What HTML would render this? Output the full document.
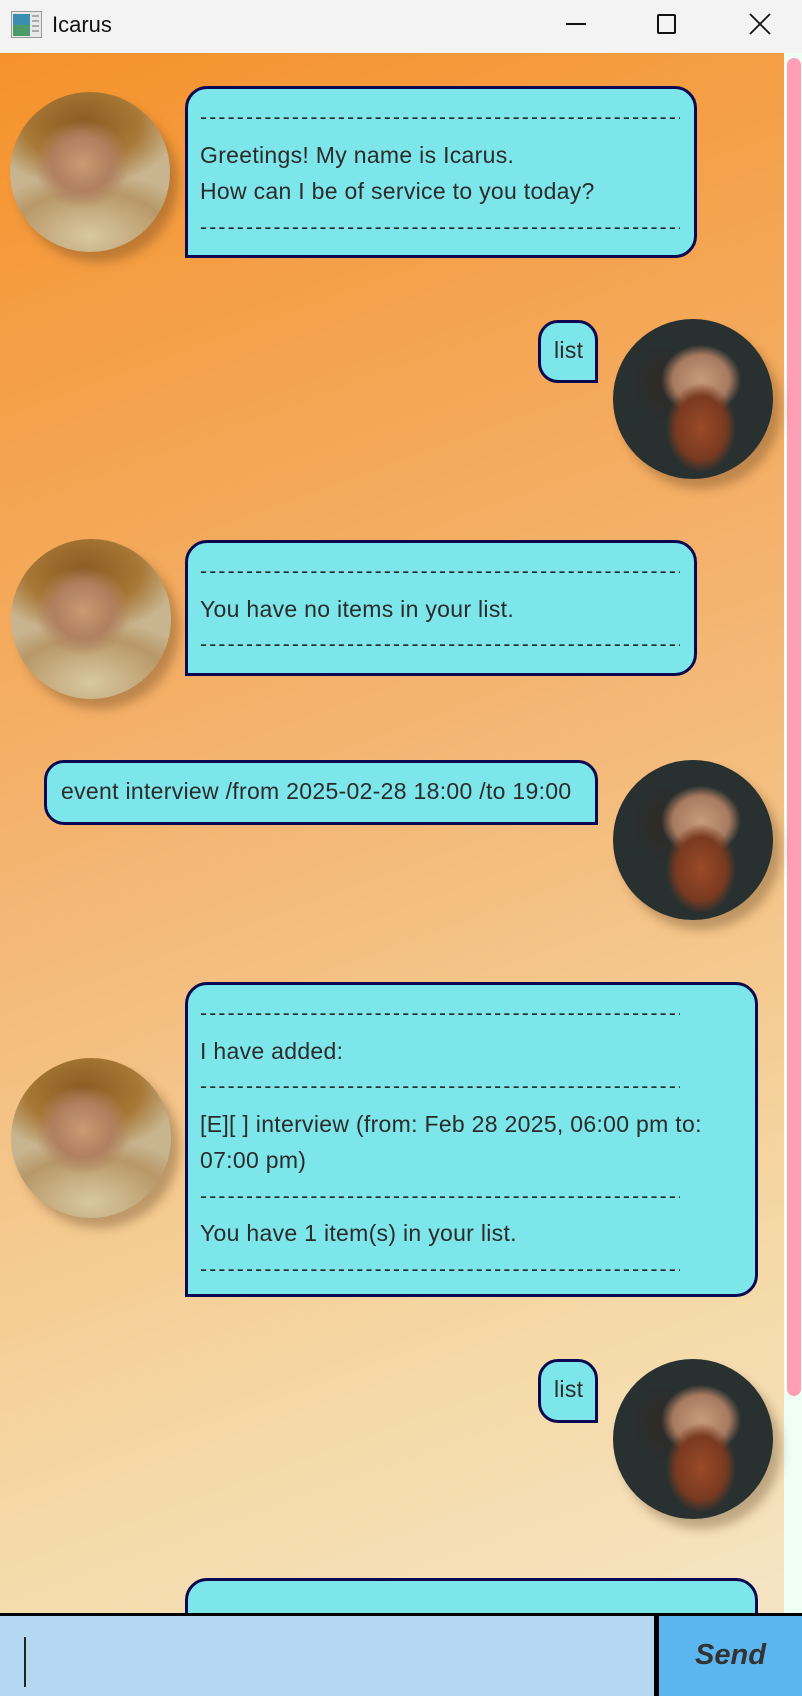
<!DOCTYPE html>
<html><head><meta charset="utf-8"><style>
*{margin:0;padding:0;box-sizing:border-box}
body{width:802px;height:1696px;overflow:hidden;font-family:"Liberation Sans",sans-serif;background:#f3f3f3;position:relative}
.title{position:absolute;left:0;top:0;width:802px;height:53px;background:#f3f3f3}
.title .t{position:absolute;left:52px;top:12px;font-size:22px;color:#111}
.chat{position:absolute;left:0;top:53px;width:784px;height:1560px;background:linear-gradient(160deg,#f5922c 0%,#f4b572 45%,#f5d9a6 80%,#f5e4c4 100%);overflow:hidden}
.sb{position:absolute;left:784px;top:53px;width:18px;height:1560px;background:#f0fff4}
.thumb{position:absolute;left:787px;top:58px;width:14px;height:1338px;background:#ff9eb5;border-radius:7px}
.b{position:absolute;background:#7de6ea;border:3.5px solid #0a0850;color:#2b2b2b;font-size:23px;letter-spacing:0.3px;line-height:36.5px;padding:11px 12px;white-space:nowrap;overflow:hidden}
.bot{border-radius:22px 22px 22px 0}
.usr{border-radius:20px 20px 0 20px}
.d{overflow:hidden;width:480px;letter-spacing:2.2px;font-size:21px}
.av{position:absolute;width:160px;height:160px;border-radius:50%;box-shadow:8px 10px 10px rgba(90,60,30,.35)}
.a1{background:radial-gradient(ellipse 30% 28% at 45% 45%,#c99a72 0%,#b08060 60%,transparent 100%),radial-gradient(ellipse 60% 40% at 45% 20%,#8a5a22 0%,#a87836 60%,transparent 100%),radial-gradient(ellipse 70% 40% at 50% 90%,#d8c8a0 0%,#b89868 70%,transparent 100%),#c8b590}
.a2{background:radial-gradient(ellipse 22% 28% at 55% 68%,#9a4a28 0%,#7a3a20 70%,transparent 100%),radial-gradient(ellipse 25% 22% at 55% 38%,#c89a7c 0%,#a87a60 70%,transparent 100%),radial-gradient(ellipse 18% 25% at 30% 40%,#302a26 0%,transparent 100%),#283030}
.input{position:absolute;left:0;top:1613px;width:802px;height:83px;background:#b4d8f2;border-top:3px solid #000}
.send{position:absolute;left:654px;top:1613px;width:148px;height:83px;background:#5bb6f0;border-top:3px solid #000;border-left:5px solid #000;font-weight:bold;font-style:italic;font-size:29px;color:#333;text-align:center;line-height:78px}
.cur{position:absolute;left:24px;top:1637px;width:2px;height:50px;background:#222}
</style></head><body>
<div class="title">
<svg style="position:absolute;left:11px;top:11px" width="31" height="27" viewBox="0 0 31 27"><rect x="0.5" y="0.5" width="30" height="26" fill="#e8e8e8" stroke="#999"/><rect x="2" y="3" width="17" height="22" fill="#3a8fb0"/><rect x="2" y="14" width="17" height="11" fill="#4a9a6a"/><rect x="21" y="4" width="7" height="2" fill="#aaa"/><rect x="21" y="9" width="7" height="2" fill="#aaa"/><rect x="21" y="14" width="7" height="2" fill="#aaa"/><rect x="21" y="19" width="7" height="2" fill="#aaa"/></svg>
<div class="t">Icarus</div>
<div style="position:absolute;left:566px;top:23px;width:20px;height:2px;background:#111"></div>
<div style="position:absolute;left:657px;top:14px;width:19px;height:20px;border:2px solid #111;border-radius:2px"></div>
<svg style="position:absolute;left:749px;top:13px" width="22" height="22"><path d="M1 1L21 21M21 1L1 21" stroke="#111" stroke-width="1.8"/></svg>
</div>
<div class="chat"></div>
<div class="sb"></div><div class="thumb"></div>

<div class="av a1" style="left:10px;top:92px"></div>
<div class="b bot" style="left:185px;top:86px;width:512px;height:172px"><div class="d">------------------------------------------------------------------</div>Greetings! My name is Icarus.<br>How can I be of service to you today?<div class="d">------------------------------------------------------------------</div></div>

<div class="b usr" style="left:538px;top:320px;width:60px;height:63px;padding:9px 13px">list</div>
<div class="av a2" style="left:613px;top:319px"></div>

<div class="av a1" style="left:11px;top:539px"></div>
<div class="b bot" style="left:185px;top:540px;width:512px;height:136px"><div class="d">------------------------------------------------------------------</div>You have no items in your list.<div class="d">------------------------------------------------------------------</div></div>

<div class="b usr" style="left:44px;top:760px;width:554px;height:65px;padding:10px 14px">event interview /from 2025-02-28 18:00 /to 19:00</div>
<div class="av a2" style="left:613px;top:760px"></div>

<div class="av a1" style="left:11px;top:1058px"></div>
<div class="b bot" style="left:185px;top:982px;width:573px;height:315px"><div class="d">------------------------------------------------------------------</div>I have added:<div class="d">------------------------------------------------------------------</div>[E][ ] interview (from: Feb 28 2025, 06:00 pm to:<br>07:00 pm)<div class="d">------------------------------------------------------------------</div>You have 1 item(s) in your list.<div class="d">------------------------------------------------------------------</div></div>

<div class="b usr" style="left:538px;top:1359px;width:60px;height:64px;padding:9px 13px">list</div>
<div class="av a2" style="left:613px;top:1359px"></div>

<div class="b bot" style="left:185px;top:1578px;width:573px;height:80px"></div>

<div class="input"></div>
<div class="cur"></div>
<div class="send">Send</div>
</body></html>
